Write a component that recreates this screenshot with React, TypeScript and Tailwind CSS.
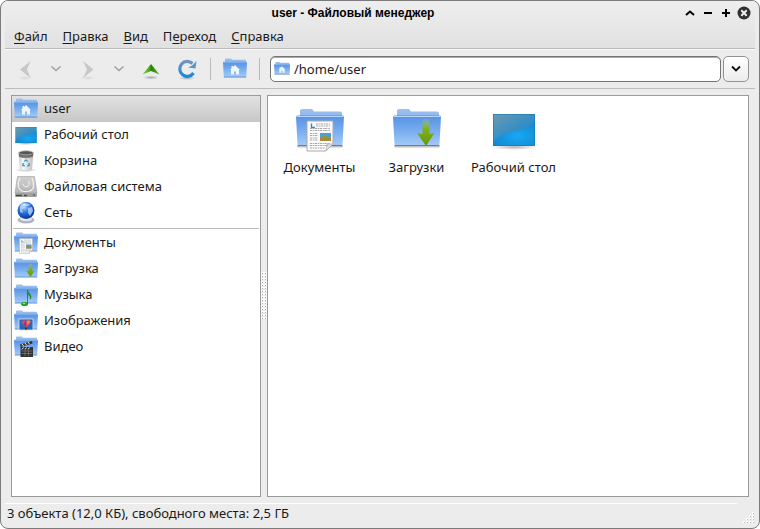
import type { ReactNode } from "react";

type Emblem = "home" | "docs" | "download" | "music" | "pictures" | "video";

function Gradients() {
  return (
    <svg className="absolute h-0 w-0" aria-hidden="true">
      <defs>
        <linearGradient id="folderBack" x1="0" y1="0" x2="0" y2="1">
          <stop offset="0" stopColor="#9dc2f1" />
          <stop offset="1" stopColor="#5a92df" />
        </linearGradient>
        <linearGradient id="folderFront" x1="0" y1="0" x2="0" y2="1">
          <stop offset="0" stopColor="#5792e2" />
          <stop offset="0.25" stopColor="#659ee9" />
          <stop offset="1" stopColor="#a4cbf8" />
        </linearGradient>
        <linearGradient id="desk" x1="0" y1="0" x2="0.8" y2="1">
          <stop offset="0" stopColor="#6f99af" />
          <stop offset="0.5" stopColor="#3a8fc2" />
          <stop offset="1" stopColor="#0a8ad8" />
        </linearGradient>
        <radialGradient id="deskGlow" cx="0.6" cy="0.6" r="0.7">
          <stop offset="0" stopColor="#16a8f5" />
          <stop offset="1" stopColor="#1485cb" />
        </radialGradient>
        <linearGradient id="arrowGreen" x1="0" y1="0" x2="0" y2="1">
          <stop offset="0" stopColor="#a9c76b" stopOpacity="0.2" />
          <stop offset="0.35" stopColor="#82b11a" />
          <stop offset="1" stopColor="#5f9a05" />
        </linearGradient>
        <linearGradient id="upGreen" x1="0" y1="0" x2="1" y2="0">
          <stop offset="0" stopColor="#8bd84b" />
          <stop offset="0.45" stopColor="#3fa016" />
          <stop offset="0.5" stopColor="#2b7a10" />
          <stop offset="1" stopColor="#5fb932" />
        </linearGradient>
        <linearGradient id="reload" x1="0" y1="0" x2="0" y2="1">
          <stop offset="0" stopColor="#7794bd" />
          <stop offset="1" stopColor="#1788dc" />
        </linearGradient>
        <linearGradient id="metal" x1="0" y1="0" x2="1" y2="0">
          <stop offset="0" stopColor="#c4c4c4" />
          <stop offset="0.3" stopColor="#f6f6f6" />
          <stop offset="1" stopColor="#bdbdbd" />
        </linearGradient>
        <linearGradient id="bin" x1="0" y1="0" x2="0" y2="1">
          <stop offset="0" stopColor="#444" />
          <stop offset="1" stopColor="#8d8d8d" />
        </linearGradient>
        <linearGradient id="drive" x1="0" y1="0" x2="0" y2="1">
          <stop offset="0" stopColor="#cfcfcf" />
          <stop offset="1" stopColor="#b9b9b9" />
        </linearGradient>
        <radialGradient id="globe" cx="0.4" cy="0.3" r="0.7">
          <stop offset="0" stopColor="#a8d0ff" />
          <stop offset="0.5" stopColor="#2c6fdc" />
          <stop offset="1" stopColor="#0a349b" />
        </radialGradient>
        <radialGradient id="shade">
          <stop offset="0" stopColor="#000" stopOpacity="0.3" />
          <stop offset="1" stopColor="#000" stopOpacity="0" />
        </radialGradient>
      </defs>
    </svg>
  );
}

function EmblemShape({ kind }: { kind: Emblem }) {
  switch (kind) {
    case "home":
      return (
        <path d="M24 16 L34 26 H32 V35 H26 V29 H22 V35 H16 V26 H14 L17 22.500 V18 H20 V20 Z" fill="#eef6ff" />
      );
    case "docs":
      return (
        <g>
          <path d="M11 15 H37 V38 L30 45 H11 Z" fill="#fbfbfb" stroke="#aaa" strokeWidth="1" />
          <path d="M37 38 H31 L30 45 Z" fill="#ddd" stroke="#aaa" strokeWidth="0.6" />
          <path d="M15.500 17.500 V21.500 H19" fill="none" stroke="#2f86d8" strokeWidth="1.4" />
          <path
            d="M20 18 H34 M20 20 H34 M14 22.500 H34 M14 24.500 H34 M14 27.500 H22 M14 29.500 H22 M14 32 H22 M14 34 H22 M14 37.500 H34 M14 39.500 H32 M14 42 H29"
            stroke="#a8a8a8"
            strokeWidth="1"
            strokeDasharray="2.4 0.7 1.2 0.5"
          />
          <rect x="24" y="27" width="11" height="8" fill="#48a0dc" />
          <path d="M24 31 L28 30 L35 31 V35 H24 Z" fill="#a58b3b" />
        </g>
      );
    case "download":
      return (
        <path d="M29.500 13 H36.500 V28 L41.500 27 L33 40 L24 27 L29.500 28 Z" fill="url(#arrowGreen)" />
      );
    case "music":
      return (
        <g>
          <ellipse cx="21" cy="42" rx="7" ry="4" fill="#18a51d" />
          <ellipse cx="20" cy="41" rx="3" ry="1.500" fill="#8be77c" />
          <path d="M27 42 V14 C28 21 36 22 33 32 C33 25 30 24 28.500 23" fill="#239b2a" stroke="#187a22" strokeWidth="1.400" />
        </g>
      );
    case "pictures":
      return (
        <g>
          <rect x="10" y="20" width="28" height="22" fill="#2867bd" stroke="#dce7f5" strokeWidth="1.500" />
          <path d="M24 38 L14 27 Q16 21 24 23 Q33 20 34 27 Z" fill="#c8506a" />
          <path d="M24 23 V38 L19 30 Z" fill="#7e3d99" />
          <path d="M26 23 L33 24 L27 33 Z" fill="#e69144" />
          <rect x="22" y="37" width="4" height="4" fill="#4d2d27" />
        </g>
      );
    case "video":
      return (
        <g>
          <rect x="13" y="24" width="25" height="20" fill="#333" />
          <path d="M12 19 L36 12 L37 17 L13 24 Z" fill="#333" />
          <path d="M16 18 L19 22 M22 16 L25 20 M28 14 L31 18 M16 29 L19 25 M22 29 L25 25 M28 29 L31 25" stroke="#eee" strokeWidth="2" />
          <path d="M15 32 H36 M15 37 H36 M22 31 V42 M29 31 V42" stroke="#888" strokeWidth="1.200" />
        </g>
      );
  }
}

function FolderIcon({ kind, className }: { kind: Emblem; className: string }) {
  return (
    <svg viewBox="0 0 48 48" className={className} aria-hidden="true">
      <rect x="1" y="38.500" width="46" height="3" rx="1.500" fill="#000" opacity="0.25" />
      <path d="M4 13 V4.500 Q4 3 6 3 H16 L18 5.500 H44 Q46 5.500 46 7.500 V36 H4 Z" fill="url(#folderBack)" />
      <path d="M0 11 Q0 9.500 1.500 9.500 H46.500 Q48 9.500 48 11 L46.500 38 Q46.500 40 45 40 H3 Q1.500 40 1.500 38 Z" fill="url(#folderFront)" />
      <path d="M0.500 10.500 H47.500" stroke="#b9d5f7" strokeWidth="1" />
      <path d="M2 39.500 H46" stroke="#4c82c9" strokeWidth="1" />
      <EmblemShape kind={kind} />
    </svg>
  );
}

function DesktopIcon({ className }: { className: string }) {
  return (
    <svg viewBox="0 0 48 48" className={className} aria-hidden="true">
      <ellipse cx="24" cy="41" rx="23" ry="3" fill="url(#shade)" />
      <rect x="3" y="8" width="42" height="32" fill="url(#desk)" />
      <path d="M3 36 C16 20 36 30 45 15 V40 H3 Z" fill="url(#deskGlow)" />
      <rect x="3.500" y="8.500" width="41" height="31" fill="none" stroke="#1679b5" strokeWidth="1" opacity="0.6" />
    </svg>
  );
}

function TrashIcon() {
  return (
    <svg viewBox="0 0 24 24" className="size-6 shrink-0" aria-hidden="true">
      <ellipse cx="12" cy="21" rx="11" ry="2" fill="url(#shade)" />
      <path d="M4.500 4 L6 20.500 Q12 22.500 18 20.500 L19.500 4 Z" fill="url(#metal)" />
      <path d="M4.700 4 L5.200 8 Q12 10.500 18.800 8 L19.300 4 Z" fill="url(#bin)" />
      <ellipse cx="12" cy="3.800" rx="7.300" ry="2" fill="#555" stroke="#b5b5b5" strokeWidth="0.800" />
      <path d="M10.300 12.500 L12 11 L13.700 12.500 M14.700 14 L15.300 16.300 L13.200 17 M10.800 17 L8.700 16.300 L9.500 14" fill="none" stroke="#3a9dd8" strokeWidth="1.400" />
    </svg>
  );
}

function DriveIcon() {
  return (
    <svg viewBox="0 0 24 24" className="size-6 shrink-0" aria-hidden="true">
      <path d="M3.500 1.500 H20.500 L23 18 H1 Z" fill="url(#drive)" stroke="#a0a0a0" strokeWidth="0.600" />
      <path d="M6 3 Q3.500 8 4.500 12 Q7 17 12 16.500 Q18 16.500 19.500 12 Q20 7 18 3" fill="none" stroke="#f2f2f2" strokeWidth="1.200" />
      <path d="M9 9 Q10 12.500 13.500 11.500 Q16 10 15 6" fill="none" stroke="#f2f2f2" strokeWidth="1" />
      <path d="M5.500 12 Q8 15.500 12 15.500 Q17 15.500 18.500 11.500" fill="none" stroke="#999" strokeWidth="0.500" />
      <rect x="1" y="18" width="22" height="4" rx="1" fill="#a2a2a2" />
      <path d="M2 20.500 H8 M10 20.500 H13" stroke="#4c4c4c" strokeWidth="1.500" />
      <rect x="19" y="19" width="2" height="2" fill="#777" />
    </svg>
  );
}

function NetworkIcon() {
  return (
    <svg viewBox="0 0 24 24" className="size-6 shrink-0" aria-hidden="true">
      <ellipse cx="12" cy="19" rx="8.500" ry="3.500" fill="#aeb5c0" />
      <ellipse cx="12" cy="18" rx="6" ry="2" fill="#e5e9ee" />
      <circle cx="12" cy="9.500" r="8.500" fill="url(#globe)" />
      <path d="M6 5 Q9 2 12 3 L11 7 L8 8 L9 12 L6 11 Z M14 7 L18 6 L19 10 L16 15 L14 12 Z" fill="#b9dcff" opacity="0.750" />
      <path d="M6 3.500 Q12 0.500 17 4 Q12 6 6 3.500 Z" fill="#fff" opacity="0.450" />
    </svg>
  );
}

const menus = [
  ["", "Ф", "айл"],
  ["", "П", "равка"],
  ["", "В", "ид"],
  ["П", "е", "реход"],
  ["", "С", "правка"],
];

const smallIcon = "size-6 shrink-0";
const largeIcon = "size-12 shrink-0";

const places: { name: string; icon: ReactNode }[] = [
  { name: "user", icon: <FolderIcon kind="home" className={smallIcon} /> },
  { name: "Рабочий стол", icon: <DesktopIcon className={smallIcon} /> },
  { name: "Корзина", icon: <TrashIcon /> },
  { name: "Файловая система", icon: <DriveIcon /> },
  { name: "Сеть", icon: <NetworkIcon /> },
];

const bookmarks: { name: string; icon: ReactNode }[] = [
  { name: "Документы", icon: <FolderIcon kind="docs" className={smallIcon} /> },
  { name: "Загрузка", icon: <FolderIcon kind="download" className={smallIcon} /> },
  { name: "Музыка", icon: <FolderIcon kind="music" className={smallIcon} /> },
  { name: "Изображения", icon: <FolderIcon kind="pictures" className={smallIcon} /> },
  { name: "Видео", icon: <FolderIcon kind="video" className={smallIcon} /> },
];

const files: { name: string; icon: ReactNode }[] = [
  { name: "Документы", icon: <FolderIcon kind="docs" className={largeIcon} /> },
  { name: "Загрузки", icon: <FolderIcon kind="download" className={largeIcon} /> },
  { name: "Рабочий стол", icon: <DesktopIcon className={largeIcon} /> },
];

function PlaceRow({ name, icon, active }: { name: string; icon: ReactNode; active?: boolean }) {
  return (
    <li>
      <button
        type="button"
        className={
          active
            ? "flex h-[26px] w-full items-center gap-1.5 bg-linear-to-b from-[#e2e2e2] to-[#c7c7c7] px-0.5 text-left"
            : "flex h-[26px] w-full items-center gap-1.5 px-0.5 text-left"
        }
      >
        {icon}
        <span className="pb-0.5">{name}</span>
      </button>
    </li>
  );
}

function ToolButton({ label, className, children }: { label: string; className: string; children: ReactNode }) {
  return (
    <button type="button" aria-label={label} className={`flex h-8 shrink-0 items-center justify-center ${className}`}>
      {children}
    </button>
  );
}

function HistoryChevron() {
  return (
    <svg viewBox="0 0 12 8" className="h-2 w-3" aria-hidden="true">
      <path d="M1.500 1.500 L6 5.500 L10.500 1.500" fill="none" stroke="#a0a0a0" strokeWidth="1.600" />
    </svg>
  );
}

function TitleBar() {
  return (
    <header className="flex h-6 items-center">
      <h1 className="min-w-0 flex-1 truncate pl-5 text-center font-['Liberation_Sans',Arial,sans-serif] text-xs font-bold text-black">
        user - Файловый менеджер
      </h1>
      <div className="flex items-center justify-end pr-0.5">
        <button type="button" aria-label="Свернуть в заголовок" className="flex h-4 w-[18px] items-center justify-center">
          <svg viewBox="0 0 10 6" className="h-1.5 w-2.5" aria-hidden="true">
            <path d="M1 5 L5 1.500 L9 5" fill="none" stroke="#000" strokeWidth="2" />
          </svg>
        </button>
        <button type="button" aria-label="Свернуть" className="flex h-4 w-[18px] items-center justify-center">
          <span className="h-0.5 w-2 bg-black" />
        </button>
        <button type="button" aria-label="Развернуть" className="flex h-4 w-[18px] items-center justify-center">
          <svg viewBox="0 0 8 8" className="size-2" aria-hidden="true">
            <path d="M0 4 H8 M4 0 V8" stroke="#000" strokeWidth="2" />
          </svg>
        </button>
        <button type="button" aria-label="Закрыть" className="flex h-4 w-[18px] items-center justify-center">
          <svg viewBox="0 0 14 14" className="size-3.5" aria-hidden="true">
            <circle cx="7" cy="7" r="6.500" fill="#303030" />
            <path d="M4.300 4.300 L9.700 9.700 M9.700 4.300 L4.300 9.700" stroke="#f0f0f0" strokeWidth="2" />
          </svg>
        </button>
      </div>
    </header>
  );
}

function Toolbar() {
  return (
    <div className="flex h-10 items-center border-b border-[#bcbcbc] border-t border-t-[#f8f8f8] pr-1.5">
      <ToolButton label="Назад" className="w-10">
        <svg viewBox="0 0 24 24" className="size-6" aria-hidden="true">
          <ellipse cx="12" cy="21" rx="7" ry="2" fill="url(#shade)" opacity="0.300" />
          <path d="M17.500 4 L7 12.500 L17.500 21 L14 12.500 Z" fill="#c6c8c6" />
        </svg>
      </ToolButton>
      <ToolButton label="История назад" className="w-[22px]">
        <HistoryChevron />
      </ToolButton>
      <ToolButton label="Вперёд" className="w-[41px]">
        <svg viewBox="0 0 24 24" className="size-6" aria-hidden="true">
          <ellipse cx="12" cy="21" rx="7" ry="2" fill="url(#shade)" opacity="0.300" />
          <path d="M7 4 L17.500 12.500 L7 21 L11 12.500 Z" fill="#c6c8c6" />
        </svg>
      </ToolButton>
      <ToolButton label="История вперёд" className="w-[22px]">
        <HistoryChevron />
      </ToolButton>
      <ToolButton label="Вверх" className="w-[42px]">
        <svg viewBox="0 0 24 24" className="size-6" aria-hidden="true">
          <ellipse cx="12" cy="20.500" rx="8" ry="2" fill="url(#shade)" />
          <path d="M12 7 L20.500 17.500 L12 14 L3.500 17.500 Z" fill="url(#upGreen)" />
        </svg>
      </ToolButton>
      <ToolButton label="Обновить" className="w-[30px]">
        <svg viewBox="0 0 24 24" className="size-6" aria-hidden="true">
          <ellipse cx="12" cy="21" rx="8" ry="2" fill="url(#shade)" />
          <path d="M17.500 6.500 A7.500 7.500 0 1 0 18.500 16" fill="none" stroke="url(#reload)" strokeWidth="3.200" />
          <path d="M21.500 3.500 L20.500 11.500 L13 10.500 Q18 9 21.500 3.500 Z" fill="#4a9bd6" />
        </svg>
      </ToolButton>
      <span className="mx-2 h-[22px] w-px bg-[#bbb]" />
      <ToolButton label="Домашняя папка" className="w-8">
        <FolderIcon kind="home" className={smallIcon} />
      </ToolButton>
      <span className="mx-2 h-[22px] w-px bg-[#bbb]" />
      <div className="ml-0.5 flex h-[26px] min-w-0 flex-1 items-center gap-1 rounded-[5px] border border-[#757575] bg-white px-[3px] shadow-[inset_0_1px_0_#a9a9a9]">
        <FolderIcon kind="home" className="size-4 shrink-0" />
        <input type="text" aria-label="Путь" defaultValue="/home/user" className="min-w-0 flex-1 bg-transparent outline-none" />
      </div>
      <button
        type="button"
        aria-label="Показать список путей"
        className="ml-0.5 flex h-[26px] w-[26px] shrink-0 items-center justify-center rounded-[5px] border border-[#929292] bg-linear-to-b from-white to-[#ececec]"
      >
        <svg viewBox="0 0 12 8" className="h-2 w-3" aria-hidden="true">
          <path d="M2 1.500 L6 5.500 L10 1.500" fill="none" stroke="#111" strokeWidth="1.900" />
        </svg>
      </button>
    </div>
  );
}

function SplitHandle() {
  return (
    <div role="separator" aria-orientation="vertical" className="flex w-1.5 shrink-0 items-center justify-center">
      <svg viewBox="0 0 6 48" className="h-12 w-1.5" aria-hidden="true">
        {Array.from({ length: 16 }, (_, i) => (
          <g key={i}>
            <rect x="0" y={i * 3} width="6" height="2" fill="#fafafa" />
            <rect x="1" y={i * 3 + 1} width="1" height="1" fill="#aaa" />
            <rect x="4" y={i * 3 + 1} width="1" height="1" fill="#aaa" />
          </g>
        ))}
      </svg>
    </div>
  );
}

function ResizeGrip() {
  const dots = [0, 1, 2, 3].flatMap((row) =>
    Array.from({ length: row + 1 }, (_, i) => ({ x: (3 - i) * 3, y: row * 3 })),
  );
  return (
    <svg viewBox="0 0 12 12" className="size-3" aria-hidden="true">
      {dots.map((d) => (
        <g key={`${d.x}-${d.y}`}>
          <rect x={d.x} y={d.y} width="2" height="2" fill="#fff" />
          <rect x={d.x + 1} y={d.y + 1} width="1" height="1" fill="#bbb" />
        </g>
      ))}
    </svg>
  );
}

export default function App() {
  return (
    <div className="h-screen bg-white font-['Noto_Sans',sans-serif] text-[13px] leading-5 text-[#1a1a1a]">
      <Gradients />
      <div className="flex h-full flex-col overflow-hidden rounded-lg border border-[#7b7b7b] bg-[#ececec] px-1">
        <div className="border-b border-[#bcbcbc] bg-linear-to-b from-[#eeeeee] to-[#e1e1e1]">
          <TitleBar />
          <nav className="flex h-[23px] items-center gap-[15px] px-[9px] pb-0.5">
            {menus.map(([before, key, after]) => (
              <button key={before + key + after} type="button">
                {before}
                <span className="underline underline-offset-2">{key}</span>
                {after}
              </button>
            ))}
          </nav>
        </div>
        <Toolbar />
        <div className="flex min-h-0 flex-1 px-1.5 pt-1.5">
          <aside className="w-[250px] shrink-0 overflow-hidden border border-[#9a9a9a] bg-white">
            <ul>
              {places.map((p, i) => (
                <PlaceRow key={p.name} name={p.name} icon={p.icon} active={i === 0} />
              ))}
            </ul>
            <hr className="mx-px mt-0.5 mb-px border-[#bbb]" />
            <ul>
              {bookmarks.map((p) => (
                <PlaceRow key={p.name} name={p.name} icon={p.icon} />
              ))}
            </ul>
          </aside>
          <SplitHandle />
          <main className="min-w-0 flex-1 overflow-hidden border border-[#9a9a9a] bg-white">
            <ul className="flex flex-wrap px-[3px] pt-2.5">
              {files.map((f) => (
                <li key={f.name}>
                  <button type="button" className="flex w-[97px] flex-col items-center gap-[3px] whitespace-nowrap">
                    {f.icon}
                    <span>{f.name}</span>
                  </button>
                </li>
              ))}
            </ul>
          </main>
        </div>
        <footer className="flex h-[31px] shrink-0 items-start pt-1.5">
          <p className="flex-1 border-t border-white px-0.5 leading-[18px]">
            3 объекта (12,0 КБ), свободного места: 2,5 ГБ
          </p>
          <span className="flex w-[18px] justify-end self-end pb-1">
            <ResizeGrip />
          </span>
        </footer>
      </div>
    </div>
  );
}
